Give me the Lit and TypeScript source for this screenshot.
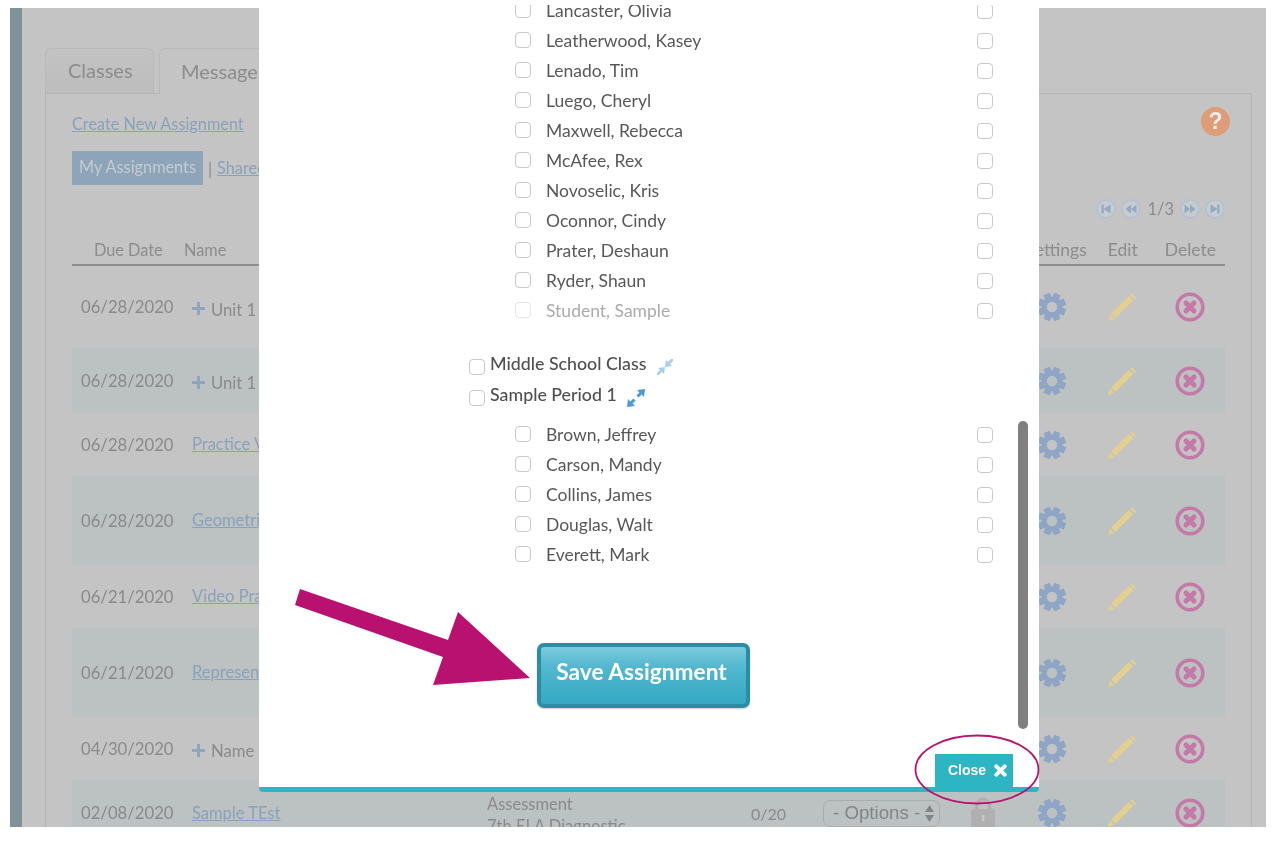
import { LitElement, html, css, svg } from "lit";
import { customElement } from "lit/decorators.js";

interface Row { date: string; name: string; plus?: boolean; h: number; band: boolean; type?: string; sub?: string; }

const ROWS: Row[] = [
  { date: "06/28/2020", name: "Unit 1 Test", plus: true, h: 82, band: false },
  { date: "06/28/2020", name: "Unit 1 Quiz", plus: true, h: 65, band: true },
  { date: "06/28/2020", name: "Practice Video", h: 63, band: false },
  { date: "06/28/2020", name: "Geometric Shapes", h: 89, band: true },
  { date: "06/21/2020", name: "Video Practice", h: 63, band: false },
  { date: "06/21/2020", name: "Representing Data", h: 89, band: true },
  { date: "04/30/2020", name: "Name Practice", plus: true, h: 63, band: false },
  { date: "02/08/2020", name: "Sample TEst", h: 66, band: true, type: "Assessment", sub: "7th ELA Diagnostic" },
];

const STUDENTS_A = ["Lancaster, Olivia", "Leatherwood, Kasey", "Lenado, Tim", "Luego, Cheryl", "Maxwell, Rebecca", "McAfee, Rex", "Novoselic, Kris", "Oconnor, Cindy", "Prater, Deshaun", "Ryder, Shaun"];
const STUDENTS_B = ["Brown, Jeffrey", "Carson, Mandy", "Collins, James", "Douglas, Walt", "Everett, Mark"];

function gearPath(): string {
  const cx = 15, cy = 15, teeth = 8, ro = 14.5, ri = 10.6;
  let d = "";
  for (let i = 0; i < teeth; i++) {
    const a = (i * 2 * Math.PI) / teeth + Math.PI / 8;
    const w = 0.24, w2 = 0.33;
    const pts = [
      [ri, a - w2], [ro, a - w], [ro, a + w], [ri, a + w2],
    ];
    for (const [r, t] of pts) {
      d += `${d ? "L" : "M"}${(cx + r * Math.cos(t)).toFixed(2)} ${(cy + r * Math.sin(t)).toFixed(2)}`;
    }
  }
  d += "Z M15 9.8 A5.2 5.2 0 1 0 15 20.2 A5.2 5.2 0 1 0 15 9.800 Z";
  return d;
}
const GEAR = gearPath();

const gear = html`<svg class="ico" width="30" height="30" viewBox="0 0 30 30"><path fill="#8fa5c6" fill-rule="evenodd" d=${GEAR}></path></svg>`;
const pencil = html`<svg class="ico" width="30" height="30" viewBox="0 0 30 30"><path fill="#e3cf8e" d="M1 29l2-6.400 4.400 4.400zM4.200 21.500L21.800 3.900l4.300 4.300-17.600 17.600zM23 2.700l1.800-1.700 4.200 4.200-1.700 1.800z"></path></svg>`;
const del = html`<svg class="ico" width="30" height="30" viewBox="0 0 30 30"><circle cx="15" cy="15" r="12.8" fill="none" stroke="#c679a8" stroke-width="3.6"></circle><path stroke="#c679a8" stroke-width="5" stroke-linecap="round" d="M11 11l8 8M19 11l-8 8"></path></svg>`;
const plus = html`<svg class="plus" width="13" height="13" viewBox="0 0 13 13"><path fill="#8fa5bf" d="M5 0h3v5h5v3H8v5H5V8H0V5h5z"></path></svg>`;
const lock = html`<svg class="ico" width="24" height="32" viewBox="0 0 24 32"><path fill="none" stroke="#b0b0b0" stroke-width="3.4" d="M5.500 13V9a6.500 6.500 0 0 1 13 0v4"></path><rect x="0" y="12" width="24" height="20" rx="2" fill="#b0b0b0"></rect><rect x="11" y="18" width="2.400" height="6" fill="#c8c8c8"></rect></svg>`;
const updown = html`<svg width="9" height="17" viewBox="0 0 9 17"><path fill="#858585" d="M4.500 0L9 7H0zM0 10h9l-4.500 7z"></path></svg>`;

function pager(kind: string) {
  const paths: Record<string, string> = {
    first: "M5.500 5.500h2.200v9H5.500zM14.500 5.500v9l-7-4.500z",
    prev: "M10 5.500v9l-5.500-4.500zM15.500 5.500v9l-5.500-4.500z",
    next: "M4.500 5.500v9l5.500-4.500zM10 5.500v9l5.500-4.500z",
    last: "M5.500 5.500v9l7-4.500zM12.300 5.500h2.200v9h-2.200z",
  };
  return html`<svg width="20" height="20" viewBox="0 0 20 20"><circle cx="10" cy="10" r="9" fill="#c9cccf" stroke="#b4c2d0" stroke-width="1.800"></circle><path fill="#92a9c3" d=${paths[kind]}></path></svg>`;
}

const overlayMarks = svg`
  <polygon fill="#b9116f" points="300,589 448,640 458,612 530,678 433,685 443,657 295,605"></polygon>
  <ellipse cx="977" cy="769.5" rx="61.5" ry="34" fill="none" stroke="#b5156f" stroke-width="1.8"></ellipse>
`;

@customElement("app-root")
export class AppRoot extends LitElement {
  static styles = css`
    :host { display: block; position: relative; width: 1283px; height: 845px; background: #fff; overflow: hidden;
      font-family: "Lato", "Noto Sans", sans-serif; filter: blur(0.4px); }
    a { color: #8aa1bb; text-decoration: underline; }

    .frame { margin: 8px 0 0 10px; width: 1256px; height: 819px; background: #c4c4c4; overflow: hidden;
      display: flex; }
    .stripe { width: 12px; flex: none; background: #7f9297; }
    .content { flex: 1; padding: 40px 14px 0 23px; min-width: 0; color: #8a8a8a; }

    .tabs { display: flex; gap: 5px; height: 45px; position: relative; z-index: 1; }
    .tab { height: 45px; box-sizing: border-box; border: 1px solid #b9b9b9; border-bottom: 0; border-radius: 6px 6px 0 0;
      font-size: 20px; color: #8c8c8c; display: flex; align-items: center; padding: 0 0 2px 22px; }
    .tab.a { width: 109px; background: linear-gradient(#c2c2c2, #bdbdbd); }
    .tab.b { width: 120px; background: #c4c4c4; margin-bottom: -1px; height: 46px; padding-left: 21px; }

    .panel { border: 1px solid #b4b4b4; border-bottom: 0; padding: 20px 26px 0 26px; height: 800px; box-sizing: border-box; }
    .toprow { display: flex; justify-content: space-between; align-items: center; height: 21px; font-size: 16.3px; }
    .toprow a { margin-top: -2px; }
    .help { width: 29px; height: 29px; border-radius: 50%; background: #de9d76; color: #ececec; font: 700 23px/29px "Liberation Sans", sans-serif;
      text-align: center; margin: -6px -5px 0 0; flex: none; }
    .filter { display: flex; align-items: center; margin-top: 16px; height: 34px; font-size: 16.3px; color: #8a8a8a; }
    .active { background: #8ea4b8; color: #c3ccd5; height: 34px; line-height: 32px; padding: 0 7px; width: 131px; box-sizing: border-box; white-space: nowrap; }
    .sep { margin: 0 5px; }
    .filter a { margin-top: -2px; }
    .pager { display: flex; justify-content: flex-end; align-items: center; gap: 5px; height: 20px; margin-top: 14px; font-size: 16.500px; color: #8c8c8c; }
    .pager span { margin: 0 1px; }

    .head { display: flex; align-items: center; margin-top: 19px; height: 22px; padding-bottom: 4px; border-bottom: 2px solid #8f8f8f; font-size: 16.3px; color: #8c8c8c; }
    .head .due { width: 90px; padding-left: 22px; }
    .head .nm { flex: 1; }
    .head .st, .head .ed, .head .dl { font-size: 17.5px; }
    .head .st { margin-right: 21px; }
    .head .ed { margin-right: 27px; }
    .head .dl { margin-right: 9px; }

    .row { display: flex; align-items: center; font-size: 16.700px; color: #8a8a8a; white-space: nowrap; }
    .row.band { background: #bcc1c2; }
    .date { width: 111px; padding-left: 9px; }
    .name { width: 295px; display: flex; align-items: center; gap: 6px; margin-top: 3px; }
    .name a { font-size: 16.500px; margin-top: -4px; }
    .name span { margin-top: 2px; }
    .plus { flex: none; }
    .type { width: 264px; font-size: 16.500px; line-height: 22px; margin-top: 4px; }
    .score { width: 72px; font-size: 16px; }
    .opt { width: 135px; }
    .select { width: 117px; height: 27px; box-sizing: border-box; border: 1px solid #acacac; border-radius: 7px; display: flex; align-items: center;
      justify-content: space-between; padding: 0 5px 0 9px; font: 18.700px "Liberation Sans", sans-serif; color: #848484; }
    .lock { width: 50px; display: flex; justify-content: center; }
    .cell { display: flex; justify-content: center; }
    .gear { width: 88px; }
    .pen { width: 52px; }
    .del { width: 70px; padding-left: 7px; }

    .modal { position: absolute; z-index: 2; left: 259px; top: 0; width: 780px; height: 792px; box-sizing: border-box; background: #fff;
      border-bottom: 5px solid #2eb5c3; border-radius: 0 0 4px 4px; padding-top: 5px; color: #585858; font-size: 17.5px; }
    .list { overflow: hidden; height: 565px; }
    .inner { margin-top: -10px; }
    .srow { display: flex; align-items: center; height: 30px; padding-left: 256px; }
    .cb { width: 16px; height: 16px; box-sizing: border-box; flex: none; border: 1.500px solid #c9c9c9; border-radius: 4px; background: #fff; }
    .sname { width: 431px; margin-left: 15px; white-space: nowrap; }
    .r { margin-top: 2px; }
    .srow.off { color: #ababab; }
    .srow.off .cb.l { border-color: #e4e4e4; }
    .groups { margin-top: 23px; margin-bottom: 9px; }
    .grow { display: flex; align-items: center; height: 31px; padding-left: 210px; font-weight: 500; font-size: 17.800px; color: #505050; }
    .grow .cb { margin-top: 6px; margin-right: 5px; }
    .grow .gl { margin-top: -2px; }
    .grow svg { margin-top: 6px; margin-left: 10px; }
    .save { margin: 73px 0 0 278px; width: 213px; height: 65px; box-sizing: border-box; border: 4px solid #2b8ca4; border-radius: 7px;
      background: linear-gradient(#7ccbdd 0%, #52b7cf 35%, #35a9c4 100%); color: #fff; font-size: 22.700px; font-weight: 700;
      display: flex; align-items: center; justify-content: center; padding: 0 4px 9px 0; box-shadow: 0 1px 2px #0003; }
    .bar { position: absolute; left: 759px; top: 421px; width: 10px; height: 308px; border-radius: 5px; background: #808080; }
    .close { position: absolute; right: 26px; bottom: -5px; width: 78px; height: 38px; background: #2eb5c3; color: #fff;
      font: 700 14px "Liberation Sans", sans-serif; display: flex; align-items: center; justify-content: flex-end; gap: 8px; padding: 0 6px 6px 0; box-sizing: border-box; }
    .marks { position: absolute; z-index: 3; left: 0; top: 0; pointer-events: none; }
  `;

  private student(n: string, off = false) {
    return html`<div class="srow ${off ? "off" : ""}"><div class="cb l"></div><div class="sname">${n}</div><div class="cb r"></div></div>`;
  }

  render() {
    return html`
      <div class="frame">
        <div class="stripe"></div>
        <div class="content">
          <div class="tabs">
            <div class="tab a">Classes</div>
            <div class="tab b">Messages</div>
          </div>
          <div class="panel">
            <div class="toprow"><a>Create New Assignment</a><div class="help">?</div></div>
            <div class="filter"><div class="active">My Assignments</div><span class="sep">|</span><a>Shared Assignments</a></div>
            <div class="pager">${pager("first")}${pager("prev")}<span>1/3</span>${pager("next")}${pager("last")}</div>
            <div class="head"><div class="due">Due Date</div><div class="nm">Name</div><div class="st">Settings</div><div class="ed">Edit</div><div class="dl">Delete</div></div>
            ${ROWS.map((r) => html`
              <div class="row ${r.band ? "band" : ""}" style="height:${r.h}px">
                <div class="date">${r.date}</div>
                <div class="name">${r.plus ? html`${plus}<span>${r.name}</span>` : html`<a>${r.name}</a>`}</div>
                <div class="type">${r.type ?? "Assessment"}<br />${r.sub ?? "7th ELA"}</div>
                <div class="score">0/20</div>
                <div class="opt"><div class="select">- Options -${updown}</div></div>
                <div class="lock">${lock}</div>
                <div class="cell gear">${gear}</div>
                <div class="cell pen">${pencil}</div>
                <div class="cell del">${del}</div>
              </div>`)}
          </div>
        </div>
      </div>

      <div class="modal">
        <div class="list">
          <div class="inner">
            ${STUDENTS_A.map((s) => this.student(s))}
            ${this.student("Student, Sample", true)}
            <div class="groups">
              <div class="grow"><div class="cb"></div><span class="gl">Middle School Class</span>
                <svg width="18" height="18" viewBox="0 0 18 18"><path fill="#a9cfeb" d="M17 1l-2 0-3 3-2-2-1 7 7-1-2-2 3-3zM1 17l2 0 3-3 2 2 1-7-7 1 2 2-3 3z"></path></svg>
              </div>
              <div class="grow"><div class="cb"></div><span class="gl">Sample Period 1</span>
                <svg width="18" height="18" viewBox="0 0 18 18"><path fill="#4c9bd5" d="M18 0l-8 1 2.400 2.400-3 3 2.200 2.200 3-3L17 8zM0 18l8-1-2.400-2.400 3-3-2.200-2.200-3 3L1 10z"></path></svg>
              </div>
            </div>
            ${STUDENTS_B.map((s) => this.student(s))}
          </div>
        </div>
        <div class="save">Save Assignment</div>
        <div class="bar"></div>
        <div class="close">Close
          <svg width="13" height="13" viewBox="0 0 14 14"><path stroke="#fff" stroke-width="4.200" stroke-linecap="round" d="M2.500 2.500l9 9M11.500 2.500l-9 9"></path></svg>
        </div>
      </div>
      <svg class="marks" width="1283" height="845" viewBox="0 0 1283 845">${overlayMarks}</svg>
    `;
  }
}
